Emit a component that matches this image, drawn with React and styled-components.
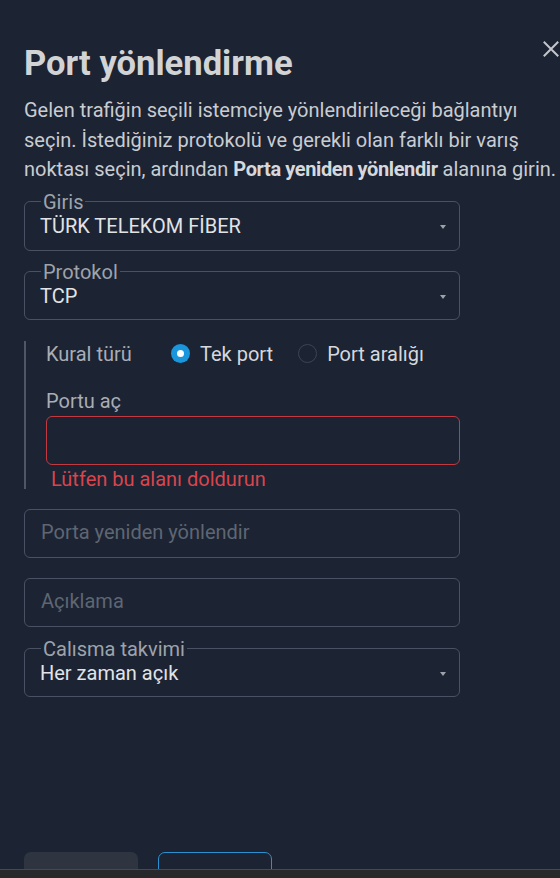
import React from 'react';
import styled, { createGlobalStyle } from 'styled-components';

const Global = createGlobalStyle`
  html, body { margin: 0; padding: 0; background: #1c2333; overflow: hidden; }
  body { font-family: Roboto, "Noto Sans", sans-serif; }
  * { box-sizing: border-box; }
`;

const Page = styled.div`
  height: 878px;
  display: flex;
  flex-direction: column;
  background: #1c2333;
  overflow: hidden;
`;

const Content = styled.div`
  flex: 1;
  min-height: 0;
  overflow: hidden;
  padding: 40px 0 0 24px;
`;

const Header = styled.div`
  display: flex;
  justify-content: space-between;
  align-items: flex-start;
`;

const Title = styled.h1`
  margin: 0;
  font-size: 34.6px;
  line-height: 46px;
  font-weight: 700;
  color: #d2d3d5;
`;

const CloseButton = styled.button`
  width: 16px;
  height: 16px;
  margin: 1px 1px 0 0;
  padding: 0;
  border: none;
  background: none;
  display: flex;
  cursor: pointer;
`;

const Desc = styled.p`
  margin: 10px 0 0;
  font-size: 20px;
  line-height: 29.5px;
  color: #c9ccd1;
  white-space: nowrap;
  b { font-weight: 700; color: #d6d8db; letter-spacing: -0.4px; }
`;

const Form = styled.div`
  display: flex;
  flex-direction: column;
  width: 436px;
`;

const Outlined = styled.fieldset`
  margin: ${p => p.$mt}px 0 0;
  padding: 2px 13px ${p => p.$pb}px 16px;
  min-width: 0;
  border: 1px solid #4a5162;
  border-radius: 6px;
`;

const Legend = styled.legend`
  padding: 0 2px;
  font-size: 20px;
  line-height: 20px;
  color: #9ea3ab;
`;

const SelectRow = styled.div`
  display: flex;
  align-items: center;
  justify-content: space-between;
  height: 24px;
  margin-left: -1px;
`;

const Value = styled.span`
  font-size: 20px;
  line-height: 24px;
  color: #e1e3e6;
`;

const Caret = styled.span`
  width: 0;
  height: 0;
  border-left: 3.5px solid transparent;
  border-right: 3.5px solid transparent;
  border-top: 4px solid #9ea3ab;
  margin-top: 2px;
`;

const RuleSection = styled.div`
  margin-top: 21px;
  border-left: 2px solid #4f5664;
  padding: 1px 0 0 20px;
  height: 148px;
  display: flex;
  flex-direction: column;
`;

const RadioRow = styled.div`
  display: flex;
  align-items: center;
  height: 24px;
`;

const RowLabel = styled.span`
  width: 125px;
  font-size: 20px;
  line-height: 24px;
  color: #a9adb4;
`;

const RadioOption = styled.label`
  display: flex;
  align-items: center;
  gap: 10px;
  margin-right: 25px;
  font-size: 20px;
  line-height: 24px;
  color: #d6d8db;
`;

const RadioDot = styled.span`
  width: 19px;
  height: 19px;
  border-radius: 50%;
  display: flex;
  align-items: center;
  justify-content: center;
  background: ${p => (p.$checked ? '#1a96dc' : 'transparent')};
  border: ${p => (p.$checked ? 'none' : '1px solid #3b4456')};
  &::after {
    content: '';
    width: 7px;
    height: 7px;
    border-radius: 50%;
    background: ${p => (p.$checked ? '#ffffff' : 'transparent')};
  }
`;

const FieldLabel = styled.span`
  margin-top: 23px;
  font-size: 20px;
  line-height: 24px;
  color: #a9adb4;
`;

const TextInput = styled.input`
  display: block;
  width: 100%;
  height: 49px;
  margin-top: ${p => p.$mt}px;
  padding: 0 16px 3px;
  border: 1px solid ${p => (p.$error ? '#c2393f' : '#4a5162')};
  border-radius: 6px;
  background: transparent;
  font-family: Roboto, "Noto Sans", sans-serif;
  font-size: 20px;
  color: #e1e3e6;
  outline: none;
  &::placeholder { color: #5f6672; }
`;

const ErrorText = styled.span`
  margin-top: 4px;
  padding-left: 5px;
  font-size: 20px;
  line-height: 20px;
  color: #d9454c;
`;

const Footer = styled.div`
  display: flex;
  gap: 20px;
  margin-top: 155px;
`;

const Button = styled.button`
  width: 114px;
  height: 40px;
  flex-shrink: 0;
  border-radius: 7px;
  font-family: Roboto, "Noto Sans", sans-serif;
  font-size: 20px;
  line-height: 24px;
  display: flex;
  align-items: flex-start;
  justify-content: center;
  padding: 15px 0 0;
  background: ${p => (p.$outline ? 'transparent' : '#2f3540')};
  border: ${p => (p.$outline ? '1.5px solid #2b8fd0' : 'none')};
  color: ${p => (p.$outline ? '#2b8fd0' : '#8a9099')};
`;

const BottomBar = styled.div`
  height: 9px;
  flex-shrink: 0;
  background: #26282c;
  border-top: 1px solid #47494d;
`;

function Select({ label, value, mt, pb = 12 }) {
  return (
    <Outlined $mt={mt} $pb={pb}>
      <Legend>{label}</Legend>
      <SelectRow>
        <Value>{value}</Value>
        <Caret />
      </SelectRow>
    </Outlined>
  );
}

export default function App() {
  return (
    <Page>
      <Global />
      <Content>
        <Header>
          <Title>Port yönlendirme</Title>
          <CloseButton aria-label="Kapat">
            <svg width="16" height="16" viewBox="0 0 16 16">
              <path d="M1.5 1.5 L14.5 14.5 M14.5 1.5 L1.5 14.5" stroke="#c3c6cb" strokeWidth="2" strokeLinecap="square" />
            </svg>
          </CloseButton>
        </Header>
        <Desc>
          Gelen trafiğin seçili istemciye yönlendirileceği bağlantıyı
          <br />
          seçin. İstediğiniz protokolü ve gerekli olan farklı bir varış
          <br />
          noktası seçin, ardından <b>Porta yeniden yönlendir</b> alanına girin.
        </Desc>
        <Form>
          <Select label="Giris" value="TÜRK TELEKOM FİBER" mt={7} />
          <Select label="Protokol" value="TCP" mt={11} pb={11} />
          <RuleSection>
            <RadioRow>
              <RowLabel>Kural türü</RowLabel>
              <RadioOption>
                <RadioDot $checked />
                Tek port
              </RadioOption>
              <RadioOption>
                <RadioDot />
                Port aralığı
              </RadioOption>
            </RadioRow>
            <FieldLabel>Portu aç</FieldLabel>
            <TextInput $mt={3} $error />
            <ErrorText>Lütfen bu alanı doldurun</ErrorText>
          </RuleSection>
          <TextInput $mt={20} placeholder="Porta yeniden yönlendir" />
          <TextInput $mt={20} placeholder="Açıklama" />
          <Select label="Calısma takvimi" value="Her zaman açık" mt={12} pb={11} />
        </Form>
        <Footer>
          <Button>Geri</Button>
          <Button $outline>İptal</Button>
        </Footer>
      </Content>
      <BottomBar />
    </Page>
  );
}
